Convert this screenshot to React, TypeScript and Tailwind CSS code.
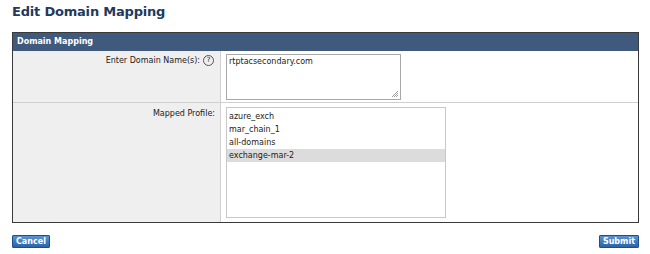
export default function App() {
  const profiles = ["azure_exch", "mar_chain_1", "all-domains", "exchange-mar-2"];
  const selected = "exchange-mar-2";

  return (
    <div className="w-[650px] h-[254px] bg-white px-[12px] font-['DejaVu_Sans',sans-serif] text-[8px] text-[#222]">
      <h1 className="pt-[3px] text-[13px] font-bold leading-[18px] tracking-[-0.2px] text-[#1f3a5c]">
        Edit Domain Mapping
      </h1>

      <div className="mt-[11px] w-[627px] border border-[#3a3a3a]">
        <div className="h-[18px] bg-[#3f5a7c] pl-[4px] text-[8px] font-bold leading-[18px] text-white">
          Domain Mapping
        </div>

        {/* domain names row */}
        <div className="flex h-[52px] border-b border-[#cfcfcf]">
          <div className="flex w-[208px] justify-end gap-[3px] border-r border-[#cfcfcf] bg-[#efefef] pr-[6px] pt-[4px]">
            <span className="leading-[12px]">Enter Domain Name(s):</span>
            <span className="flex h-[11px] w-[11px] items-center justify-center rounded-full border border-[#555] text-[7px] leading-none">
              ?
            </span>
          </div>
          <div className="pl-[5px] pt-[3px]">
            <div className="relative h-[46px] w-[175px] border border-[#a8a8a8] bg-white px-[2px] pt-[1px] leading-[12px]">
              rtptacsecondary.com
              <svg className="absolute bottom-[1px] right-[1px]" width="8" height="8" viewBox="0 0 8 8">
                <path d="M7 1L1 7M7 3L3 7M7 5L5 7" stroke="#888" strokeWidth="0.8" />
              </svg>
            </div>
          </div>
        </div>

        {/* mapped profile row */}
        <div className="flex h-[119px]">
          <div className="flex w-[208px] justify-end border-r border-[#cfcfcf] bg-[#efefef] pr-[5px] pt-[5px]">
            <span className="leading-[12px]">Mapped Profile:</span>
          </div>
          <div className="pl-[5px] pt-[4px]">
            <div className="h-[111px] w-[220px] border border-[#c8c8c8] bg-white pt-[2px]">
              {profiles.map((p) => (
                <div
                  key={p}
                  className={
                    "px-[2px] leading-[13px] " + (p === selected ? "bg-[#dcdcdc]" : "")
                  }
                >
                  {p}
                </div>
              ))}
            </div>
          </div>
        </div>
      </div>

      <div className="mt-[12px] flex w-[627px] justify-between">
        <button className="h-[13px] rounded-[1px] border border-[#1f4f8a] bg-gradient-to-b from-[#5c93d0] to-[#2a63a8] px-[3px] text-[8px] font-bold leading-[11px] text-white">
          Cancel
        </button>
        <button className="h-[13px] rounded-[1px] border border-[#1f4f8a] bg-gradient-to-b from-[#5c93d0] to-[#2a63a8] px-[3px] text-[8px] font-bold leading-[11px] text-white">
          Submit
        </button>
      </div>
    </div>
  );
}
